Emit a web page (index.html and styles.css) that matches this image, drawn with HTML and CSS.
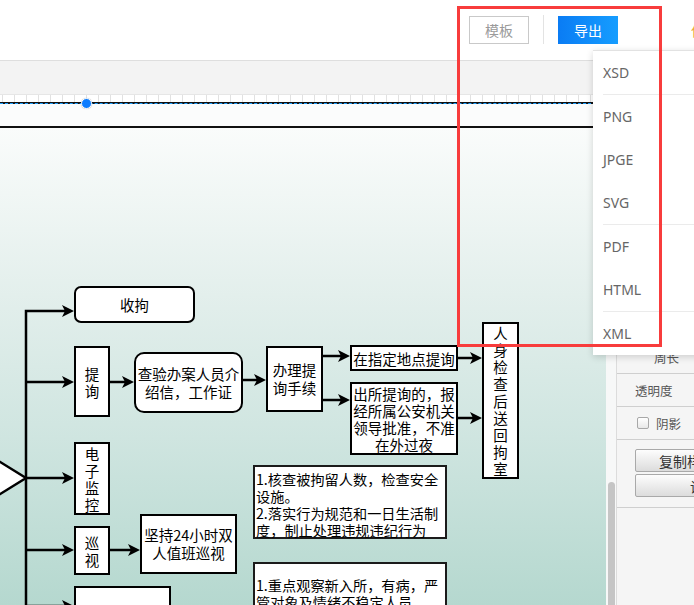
FILE: index.html
```html
<!DOCTYPE html>
<html lang="zh-CN">
<head>
<meta charset="utf-8">
<title>流程图编辑器</title>
<link rel="stylesheet" href="styles.css">
</head>
<body>
<header class="topbar">
  <button class="btn btn-ghost">模板</button>
  <span class="divider"></span>
  <button class="btn btn-primary">导出</button>
  <span class="save">保存</span>
</header>
<div class="toolbar"></div>
<main class="workspace">
  <section class="canvas">
    <div class="ruler"></div>
    <div class="pool">
      <span class="sel-line"></span>
      <span class="handle"></span>
    </div>
    <div class="diagram">
      <svg class="edges" width="606" height="477" viewBox="0 0 606 477">
        <g fill="none" stroke="#000" stroke-width="2.5">
          <path d="M26 480 V183 H66"/>
          <path d="M26 254 H66"/>
          <path d="M26 350 H66"/>
          <path d="M26 422 H66"/>
          <path d="M26 478 H66"/>
          <path d="M110 254 H126"/>
          <path d="M243 252 H258"/>
          <path d="M323 228 H342"/>
          <path d="M323 272 H342"/>
          <path d="M458 230 H474"/>
          <path d="M458 290 H474"/>
          <path d="M110 422 H132"/>
        </g>
        <polygon points="-40,309 26,350 -40,391" fill="#fff" stroke="#000" stroke-width="2.5" stroke-linejoin="miter"/>
        <g fill="#000">
          <path d="M74 183 L62 177 L65 183 L62 189 Z"/>
          <path d="M74 254 L62 248 L65 254 L62 260 Z"/>
          <path d="M74 350 L62 344 L65 350 L62 356 Z"/>
          <path d="M74 422 L62 416 L65 422 L62 428 Z"/>
          <path d="M74 478 L62 472 L65 478 L62 484 Z"/>
          <path d="M134 254 L122 248 L125 254 L122 260 Z"/>
          <path d="M266 252 L254 246 L257 252 L254 258 Z"/>
          <path d="M350 228 L338 222 L341 228 L338 234 Z"/>
          <path d="M350 272 L338 266 L341 272 L338 278 Z"/>
          <path d="M482 230 L470 224 L473 230 L470 236 Z"/>
          <path d="M482 290 L470 284 L473 290 L470 296 Z"/>
          <path d="M140 422 L128 416 L131 422 L128 428 Z"/>
        </g>
      </svg>

      <div class="node n-shouju">收拘</div>
      <div class="node n-tixun"><span class="vtext">提询</span></div>
      <div class="node n-chayan">查验办案人员介<br>绍信，工作证</div>
      <div class="node n-banli">办理提<br>询手续</div>
      <div class="node n-zhiding">在指定地点提询</div>
      <div class="node n-chusuo">出所提询的，报<br>经所属公安机关<br>领导批准，不准<br>在外过夜</div>
      <div class="node n-renshen"><span class="vtext">人身检查后送回拘室</span></div>
      <div class="node n-dianzi"><span class="vtext">电子监控</span></div>
      <div class="node n-xunshi"><span class="vtext">巡视</span></div>
      <div class="node n-jianchi">坚持24小时双<br>人值班巡视</div>
      <div class="node n-bottom"></div>
      <div class="node note n-note1">1.核查被拘留人数，检查安全<br>设施。<br>2.落实行为规范和一日生活制<br>度，制止处理违规违纪行为</div>
      <div class="node note n-note2">1.重点观察新入所，有病，严<br>管对象及情绪不稳定人员</div>
    </div>
  </section>
  <div class="scrollbar"><span class="thumb"></span></div>
  <aside class="panel">
    <div class="panel-head"></div>
    <div class="prow"></div>
    <div class="prow"></div>
    <div class="prow"></div>
    <div class="prow"></div>
    <div class="prow"></div>
    <div class="prow"></div>
    <div class="prow"></div>
    <div class="prow prow-perim">周长</div>
    <div class="prow">透明度</div>
    <div class="prow"><span class="check"></span><span class="check-label">阴影</span></div>
    <div class="pbtns">
      <button class="pbtn">复制样式</button>
      <button class="pbtn pbtn-alt">设置默认</button>
    </div>
  </aside>
</main>

<div class="export-menu">
  <div class="menu-item">XSD</div>
  <div class="menu-sep"></div>
  <div class="menu-item">PNG</div>
  <div class="menu-item">JPGE</div>
  <div class="menu-item">SVG</div>
  <div class="menu-sep"></div>
  <div class="menu-item">PDF</div>
  <div class="menu-item">HTML</div>
  <div class="menu-sep"></div>
  <div class="menu-item">XML</div>
</div>
<div class="highlight"></div>
</body>
</html>
```

FILE: styles.css
```css
* { box-sizing: border-box; }

html, body {
  margin: 0;
  padding: 0;
}

body {
  width: 694px;
  height: 605px;
  overflow: hidden;
  position: relative;
  background: #fff;
  font-family: "Noto Sans CJK SC", "Noto Sans", sans-serif;
}

/* ---------- top bar ---------- */
.topbar {
  height: 61px;
  border-bottom: 1px solid #dedede;
  display: flex;
  align-items: center;
  padding-left: 469px;
  padding-bottom: 1px;
  white-space: nowrap;
}

.btn {
  width: 60px;
  height: 28px;
  padding: 0;
  font-family: "Noto Sans CJK SC", sans-serif;
  font-size: 14px;
  line-height: 26px;
  cursor: pointer;
  flex: none;
}

.btn-ghost {
  background: #fff;
  border: 1px solid #c9c9c9;
  color: #9a9a9a;
}

.divider {
  width: 1px;
  height: 29px;
  background: #e3e3e3;
  margin: 0 14px;
  flex: none;
}

.btn-primary {
  border: none;
  color: #fff;
  background: linear-gradient(90deg, #0a7cf4, #169dff);
}

.save {
  margin-left: 73px;
  font-size: 14px;
  color: #eeaa3a;
  flex: none;
}

/* ---------- toolbar ---------- */
.toolbar {
  height: 34px;
  background: #f3f3f3;
  border-bottom: 1px solid #e6e6e6;
}

/* ---------- workspace ---------- */
.workspace {
  display: flex;
  height: 510px;
}

.canvas {
  width: 606px;
  flex: none;
  display: flex;
  flex-direction: column;
  overflow: hidden;
}

.ruler {
  height: 7px;
  background-color: #fff;
  background-image: repeating-linear-gradient(90deg, #e1e1e1 0 1px, transparent 1px 12px);
  background-position: 2px 0;
}

.pool {
  height: 26px;
  border-top: 2px solid #111;
  border-bottom: 2px solid #111;
  background: #fbfcfc;
  position: relative;
}

.sel-line {
  position: absolute;
  left: 0;
  right: 0;
  top: -1px;
  height: 0;
  border-top: 1px dashed #1ea0ff;
}

.handle {
  position: absolute;
  left: 81px;
  top: -6px;
  width: 11px;
  height: 11px;
  border-radius: 50%;
  background: #0b7cff;
  border: 1px solid #fff;
  box-shadow: 0 0 1px rgba(0, 0, 0, 0.3);
}

.diagram {
  flex: 1;
  position: relative;
  background: linear-gradient(180deg, #fafcfb 0%, #e3efec 35%, #cfe5e0 65%, #b5d8cf 100%);
}

.edges {
  position: absolute;
  left: 0;
  top: 0;
  overflow: visible;
}

.node {
  position: absolute;
  border: 2px solid #000;
  background: #fff;
  display: flex;
  align-items: center;
  justify-content: center;
  text-align: center;
  white-space: nowrap;
  font-family: "Noto Sans CJK SC", sans-serif;
  font-size: 14.5px;
  line-height: 17px;
  color: #000;
}

.vtext {
  width: 1em;
  white-space: normal;
  word-break: break-all;
  line-height: 17px;
}

.n-shouju { left: 74px; top: 158px; width: 121px; height: 37px; border-radius: 7px; }
.n-tixun { left: 74px; top: 218px; width: 36px; height: 71px; }
.n-chayan { left: 134px; top: 224px; width: 109px; height: 61px; border-radius: 10px; line-height: 18px; }
.n-banli { left: 266px; top: 218px; width: 57px; height: 66px; line-height: 18px; }
.n-zhiding { left: 350px; top: 217px; width: 108px; height: 26px; }
.n-chusuo { left: 350px; top: 254px; width: 108px; height: 73px; line-height: 17px; }
.n-renshen { left: 482px; top: 194px; width: 37px; height: 157px; }
.n-dianzi { left: 74px; top: 314px; width: 36px; height: 73px; }
.n-xunshi { left: 74px; top: 398px; width: 36px; height: 49px; }
.n-jianchi { left: 140px; top: 386px; width: 97px; height: 60px; line-height: 18px; }
.n-bottom { left: 74px; top: 458px; width: 97px; height: 40px; }

.note {
  border-color: #1b1b1b;
  justify-content: flex-start;
  align-items: flex-start;
  text-align: left;
  padding-left: 1px;
  font-size: 14.2px;
  line-height: 17px;
}

.n-note1 { left: 253px; top: 337px; width: 194px; height: 74px; padding-top: 4px; }
.n-note2 { left: 253px; top: 434px; width: 194px; height: 60px; padding-top: 13px; }

/* ---------- scrollbar ---------- */
.scrollbar {
  width: 10px;
  flex: none;
  background: #f7f8f8;
  padding-top: 387px;
}

.thumb {
  display: block;
  width: 7px;
  height: 140px;
  margin-left: 2px;
  background: #c5c5c5;
  border-radius: 4px 4px 0 0;
}

/* ---------- property panel ---------- */
.panel {
  flex: 1;
  border-left: 1px solid #dcdcdc;
  background: #f5f5f5;
  font-size: 12.5px;
  color: #555;
  overflow: hidden;
  white-space: nowrap;
}

.panel-head { height: 15px; }

.prow {
  height: 33px;
  border-bottom: 1px solid #cfcfcf;
  display: flex;
  align-items: center;
  padding-left: 18px;
}

.prow-perim { padding-left: 37px; }

.check {
  width: 12px;
  height: 12px;
  border: 1px solid #a8a8a8;
  border-radius: 2px;
  background: linear-gradient(#fff, #e8e8e8);
  margin-left: 2px;
  flex: none;
}

.check-label { margin-left: 7px; }

.pbtns {
  padding: 9px 0 10px 18px;
  border-bottom: 1px solid #cfcfcf;
  display: flex;
  flex-direction: column;
  gap: 2px;
}

.pbtn {
  width: 110px;
  height: 23px;
  padding: 0 0 0 23px;
  text-align: left;
  border: 1px solid #a9a9a9;
  border-radius: 2px;
  background: linear-gradient(#fdfdfd, #dcdcdc);
  font-family: "Noto Sans CJK SC", sans-serif;
  font-size: 14px;
  line-height: 20px;
  color: #333;
  white-space: nowrap;
}

.pbtn-alt { padding-left: 54px; }

/* ---------- export dropdown ---------- */
.export-menu {
  position: absolute;
  left: 593px;
  top: 50px;
  width: 120px;
  background: #fff;
  border-top: 1px solid #e2e2e2;
  box-shadow: 0 2px 7px rgba(0, 0, 0, 0.16);
}

.menu-item {
  height: 43px;
  line-height: 43px;
  padding-left: 10px;
  font-family: "Noto Sans", sans-serif;
  font-size: 14px;
  color: #666;
}

.menu-sep {
  height: 1px;
  margin-left: 10px;
  background: #ebebeb;
}

/* ---------- annotation highlight ---------- */
.highlight {
  position: absolute;
  left: 457px;
  top: 6px;
  width: 205px;
  height: 341px;
  border: 3px solid #f83c3c;
}
```
